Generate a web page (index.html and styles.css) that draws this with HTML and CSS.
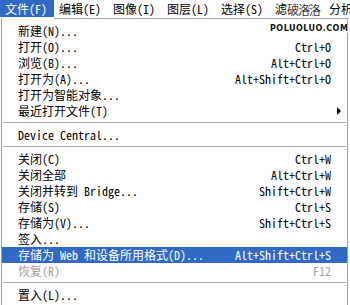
FILE: index.html
```html
<!DOCTYPE html>
<html lang="zh-CN">

<head>
    <meta charset="UTF-8">
    <title>文件菜单</title>
    <link rel="stylesheet" href="styles.css">
</head>

<body>
    <div class="menubar">
        <span class="menu active">文件(F)</span>
        <span class="menu">编辑(E)</span>
        <span class="menu">图像(I)</span>
        <span class="menu">图层(L)</span>
        <span class="menu">选择(S)</span>
        <span class="menu">滤镜(T)</span>
        <span class="menu">分析</span>
    </div>

    <div class="dropdown">
        <div class="item"><span class="label">新建(N)...</span></div>
        <div class="item"><span class="label">打开(O)...</span><span class="key">Ctrl+O</span></div>
        <div class="item"><span class="label">浏览(B)...</span><span class="key">Alt+Ctrl+O</span></div>
        <div class="item"><span class="label">打开为(A)...</span><span class="key">Alt+Shift+Ctrl+O</span></div>
        <div class="item"><span class="label">打开为智能对象...</span></div>
        <div class="item"><span class="label">最近打开文件(T)</span><span class="arrow"></span></div>
        <div class="separator"></div>
        <div class="item"><span class="label">Device Central...</span></div>
        <div class="separator"></div>
        <div class="item"><span class="label">关闭(C)</span><span class="key">Ctrl+W</span></div>
        <div class="item"><span class="label">关闭全部</span><span class="key">Alt+Ctrl+W</span></div>
        <div class="item"><span class="label">关闭并转到 Bridge...</span><span class="key">Shift+Ctrl+W</span></div>
        <div class="item"><span class="label">存储(S)</span><span class="key">Ctrl+S</span></div>
        <div class="item"><span class="label">存储为(V)...</span><span class="key">Shift+Ctrl+S</span></div>
        <div class="item"><span class="label">签入...</span></div>
        <div class="item selected"><span class="label">存储为 Web 和设备所用格式(D)...</span><span class="key">Alt+Shift+Ctrl+S</span></div>
        <div class="item disabled"><span class="label">恢复(R)</span><span class="key">F12</span></div>
        <div class="separator"></div>
        <div class="item"><span class="label">置入(L)...</span></div>
    </div>

    <!-- site watermark sitting over the menu -->
    <div class="watermark">
        <div class="wm-name">破洛洛</div>
        <div class="wm-url">POLUOLUO.COM</div>
    </div>
</body>

</html>
```

FILE: styles.css
```css
body {
    margin: 0;
    background: #fff;
    color: #000;
    font-family: "Noto Sans Mono CJK SC", "Noto Sans CJK SC", monospace;
    font-size: 12px;
    position: relative;
    height: 305px;
    overflow: hidden;
}

.menubar {
    display: flex;
    height: 18px;
    overflow: hidden;
}

.menu {
    flex-shrink: 0;
    width: 54px;
    height: 17px;
    line-height: 17px;
    padding-left: 5px;
    box-sizing: border-box;
    white-space: nowrap;
}

.menu.active {
    background: #316ac5;
    color: #fff;
}

.dropdown {
    position: relative;
    margin-left: 1px;
    width: 347px;
    box-sizing: border-box;
    border: 1px solid #a3a3a3;
    border-bottom: none;
    padding-top: 4px;
    height: 287px;
}

/* the open menu title has no line under it */
.dropdown::before {
    content: "";
    position: absolute;
    left: 0;
    top: -1px;
    width: 52px;
    height: 1px;
    background: #fff;
}

.item {
    display: flex;
    align-items: center;
    height: 16px;
    line-height: 16px;
    padding: 0 16px 0 16px;
    white-space: nowrap;
}

.item .label {
    flex: 1;
}

.item.selected {
    background: #316ac5;
    color: #fff;
}

.item.disabled {
    color: #a5a39e;
}

.arrow {
    width: 0;
    height: 0;
    border-left: 4px solid #000;
    border-top: 4px solid transparent;
    border-bottom: 4px solid transparent;
    margin-right: -10px;
}

.separator {
    height: 1px;
    background: #a6a6a6;
    margin: 3px 1px 4px 1px;
}

.watermark {
    position: absolute;
    left: 270px;
    top: 2px;
    white-space: nowrap;
}

.wm-name {
    padding-left: 17px;
    font-family: "Noto Sans CJK SC", sans-serif;
    font-size: 12px;
    line-height: 16px;
    color: #3c3c3c;
    letter-spacing: -1px;
    text-shadow: 1px 0 #fff, -1px 0 #fff, 0 1px #fff, 0 -1px #fff;
}

.wm-url {
    margin-top: 6px;
    padding-right: 2px;
    background: #fff;
    font-family: "DejaVu Sans", sans-serif;
    font-weight: bold;
    font-size: 8px;
    line-height: 9px;
    letter-spacing: 0.5px;
    color: #111;
}
```
